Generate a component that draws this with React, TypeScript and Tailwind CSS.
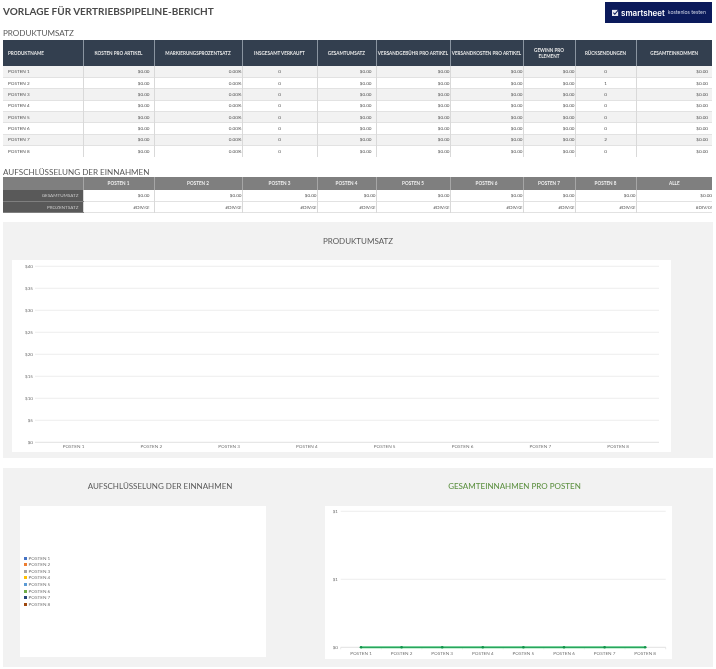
const colWidths = [80, 71, 88, 75, 59, 74, 73, 52, 61, 76];

const salesHeaders = [
  "PRODUKTNAME",
  "KOSTEN PRO ARTIKEL",
  "MARKIERUNGSPROZENTSATZ",
  "INSGESAMT VERKAUFT",
  "GESAMTUMSATZ",
  "VERSANDGEBÜHR PRO ARTIKEL",
  "VERSANDKOSTEN PRO ARTIKEL",
  "GEWINN PRO ELEMENT",
  "RÜCKSENDUNGEN",
  "GESAMTEINKOMMEN",
];

const items = ["POSTEN 1", "POSTEN 2", "POSTEN 3", "POSTEN 4", "POSTEN 5", "POSTEN 6", "POSTEN 7", "POSTEN 8"];
const returns = [0, 1, 0, 0, 0, 0, 2, 0];
const breakdownHeaders = [...items, "ALLE"];
const legendColors = ["#4472c4", "#ed7d31", "#a5a5a5", "#ffc000", "#5b9bd5", "#70ad47", "#264478", "#9e480e"];

function ColGroup() {
  return (
    <colgroup>
      {colWidths.map((width, i) => (
        <col key={i} style={{ width }} />
      ))}
    </colgroup>
  );
}

function SalesTable() {
  return (
    <table className="w-[709px] table-fixed border-collapse text-[4.6px] text-[#505050]">
      <ColGroup />
      <thead>
        <tr className="h-[26px] bg-[#333f4f] text-[#e8e8e8] font-bold">
          {salesHeaders.map((header, i) => (
            <th
              key={header}
              className={`border-l border-[#8a94a0] first:border-l-0 font-bold leading-[6px] ${
                i === 0 ? "pl-[5px] text-left" : "text-center"
              }`}
            >
              {i === 7 ? <span className="mx-auto block w-[34px]">{header}</span> : header}
            </th>
          ))}
        </tr>
      </thead>
      <tbody>
        {items.map((item, i) => (
          <tr key={item} className={`h-[11.35px] border-b border-[#e2e2e2] last:border-b-0 ${i % 2 === 0 ? "bg-[#f2f2f2]" : "bg-white"}`}>
            <td className="pl-[5px]">{item}</td>
            <td className="border-l border-[#d9d9d9] pr-[4px] text-right">$0.00</td>
            <td className="border-l border-[#d9d9d9] text-right">0.00%</td>
            <td className="border-l border-[#d9d9d9] text-center">0</td>
            <td className="border-l border-[#d9d9d9] pr-[4px] text-right">$0.00</td>
            <td className="border-l border-[#d9d9d9] text-right">$0.00</td>
            <td className="border-l border-[#d9d9d9] text-right">$0.00</td>
            <td className="border-l border-[#d9d9d9] text-right">$0.00</td>
            <td className="border-l border-[#d9d9d9] text-center">{returns[i]}</td>
            <td className="border-l border-[#d9d9d9] pr-[4px] text-right">$0.00</td>
          </tr>
        ))}
      </tbody>
    </table>
  );
}

function BreakdownTable() {
  const rows = [
    { label: "GESAMTUMSATZ", value: "$0.00" },
    { label: "PROZENTSATZ", value: "#DIV/0!" },
  ];
  return (
    <table className="w-[709px] table-fixed border-collapse text-[4.6px] text-[#505050]">
      <ColGroup />
      <thead>
        <tr className="h-[13px] bg-[#7f7f7f] text-[#f0f0f0]">
          <th />
          {breakdownHeaders.map((header) => (
            <th key={header} className="border-l border-[#a6a6a6] text-center font-bold">
              {header}
            </th>
          ))}
        </tr>
      </thead>
      <tbody>
        {rows.map((row) => (
          <tr key={row.label} className="h-[11.5px] border-b border-[#e2e2e2]">
            <td className="border-b border-[#7f7f7f] bg-[#595959] pr-[4px] text-right text-[#c8c8c8]">{row.label}</td>
            {breakdownHeaders.map((header, i) => (
              <td key={header} className={`border-l border-[#d9d9d9] text-right ${i === 0 ? "pr-[4px]" : ""}`}>
                {row.value}
              </td>
            ))}
          </tr>
        ))}
      </tbody>
    </table>
  );
}

function SalesChart() {
  const ticks = [40, 35, 30, 25, 20, 15, 10, 5, 0];
  return (
    <svg viewBox="0 0 659 192" className="block h-[192px] w-[659px] bg-white">
      {ticks.map((tick, i) => {
        const y = 6.3 + i * 22;
        return (
          <g key={tick}>
            <line x1="23" x2="647" y1={y} y2={y} stroke={tick === 0 ? "#d4d4d4" : "#e6e6e6"} strokeWidth="0.7" />
            <text x="21" y={y + 1.6} textAnchor="end" fontSize="4.6" fill="#707070">
              ${tick}
            </text>
          </g>
        );
      })}
      {items.map((item, i) => (
        <text key={item} x={61.5 + i * 77.8} y="187.6" textAnchor="middle" fontSize="4.6" fill="#707070">
          {item}
        </text>
      ))}
    </svg>
  );
}

function RevenueLineChart() {
  const yTicks = [
    { label: "$1", y: 5.3 },
    { label: "$1", y: 73.3 },
    { label: "$0", y: 141.3 },
  ];
  return (
    <svg viewBox="0 0 347 153" className="block h-[153px] w-[347px] bg-white">
      {yTicks.map((tick) => (
        <g key={tick.y}>
          <line x1="15.7" x2="340.7" y1={tick.y} y2={tick.y} stroke={tick.y > 100 ? "#d4d4d4" : "#e6e6e6"} strokeWidth="0.7" />
          <text x="13" y={tick.y + 1.6} textAnchor="end" fontSize="4.6" fill="#707070">
            {tick.label}
          </text>
        </g>
      ))}
      {[...items, ""].map((_, i) => (
        <line key={i} x1={15.7 + i * 40.62} x2={15.7 + i * 40.62} y1="141.3" y2="143.3" stroke="#d4d4d4" strokeWidth="0.5" />
      ))}
      <line x1="36" x2="320" y1="141.3" y2="141.3" stroke="#8fe3ae" strokeWidth="2.4" />
      <line x1="36" x2="320" y1="141.3" y2="141.3" stroke="#12934a" strokeWidth="1" />
      {items.map((item, i) => (
        <g key={item}>
          <circle cx={36 + i * 40.6} cy="141.3" r="1.3" fill="#12934a" />
          <text x={36 + i * 40.6} y="149.2" textAnchor="middle" fontSize="4.6" fill="#707070">
            {item}
          </text>
        </g>
      ))}
    </svg>
  );
}

function SmartsheetLogo() {
  return (
    <div className="flex h-[21px] w-[107px] items-center bg-[#0b1a5b] pl-[7px] text-white">
      <svg viewBox="0 0 8 8" className="h-[7px] w-[7px] shrink-0">
        <rect x="0" y="1" width="7" height="7" fill="#e8e8ee" />
        <path d="M1.6 4.2 L3.2 6 L7.6 0.6" fill="none" stroke="#0b1a5b" strokeWidth="1.2" />
      </svg>
      <span className="ml-[2px] font-['Inter',sans-serif] text-[8px] font-semibold leading-none">smartsheet</span>
      <span className="ml-[3px] text-[5.3px] leading-none text-[#c8cde0]">kostenlos testen</span>
    </div>
  );
}

export default function App() {
  return (
    <div className="h-[669px] w-[716px] overflow-hidden bg-white pl-[3px] pr-[3px] font-['Lato','Noto_Sans',sans-serif] blur-[0.3px]">
      <div className="flex h-[27px] items-start justify-between pt-[2px] pr-[1px]">
        <h1 className="mt-[1px] text-[10px] font-bold leading-[16px] text-[#4a4a4a]">VORLAGE FÜR VERTRIEBSPIPELINE-BERICHT</h1>
        <SmartsheetLogo />
      </div>
      <h2 className="h-[13px] text-[8.1px] leading-[13px] text-[#595959]">PRODUKTUMSATZ</h2>
      <SalesTable />
      <h2 className="mt-[9px] h-[11px] text-[8.1px] leading-[13px] text-[#595959]">AUFSCHLÜSSELUNG DER EINNAHMEN</h2>
      <BreakdownTable />

      <section className="mt-[9px] h-[236px] w-[710px] bg-[#f2f2f2] pl-[9px]">
        <h3 className="h-[38px] pr-[9px] pt-[12px] text-center text-[8px] leading-[14px] text-[#595959]">PRODUKTUMSATZ</h3>
        <SalesChart />
      </section>

      <section className="mt-[10px] flex h-[199px] w-[710px] bg-[#f2f2f2] pl-[17px]">
        <div className="w-[305px]">
          <h3 className="h-[38px] w-[280px] pt-[11px] text-center text-[8px] leading-[14px] text-[#595959]">AUFSCHLÜSSELUNG DER EINNAHMEN</h3>
          <div className="flex h-[151px] w-[246px] flex-col justify-center gap-[1.6px] bg-white pl-[4px] pb-[1px]">
            {items.map((item, i) => (
              <div key={item} className="flex h-[5px] items-center gap-[1.6px] text-[4.6px] leading-[5px] text-[#707070]">
                <span className="h-[3px] w-[3px]" style={{ backgroundColor: legendColors[i] }} />
                {item}
              </div>
            ))}
          </div>
        </div>
        <div>
          <h3 className="h-[38px] pl-[32px] pt-[11px] text-center text-[8px] font-medium leading-[14px] text-[#5f9244]">GESAMTEINNAHMEN PRO POSTEN</h3>
          <RevenueLineChart />
        </div>
      </section>
    </div>
  );
}
